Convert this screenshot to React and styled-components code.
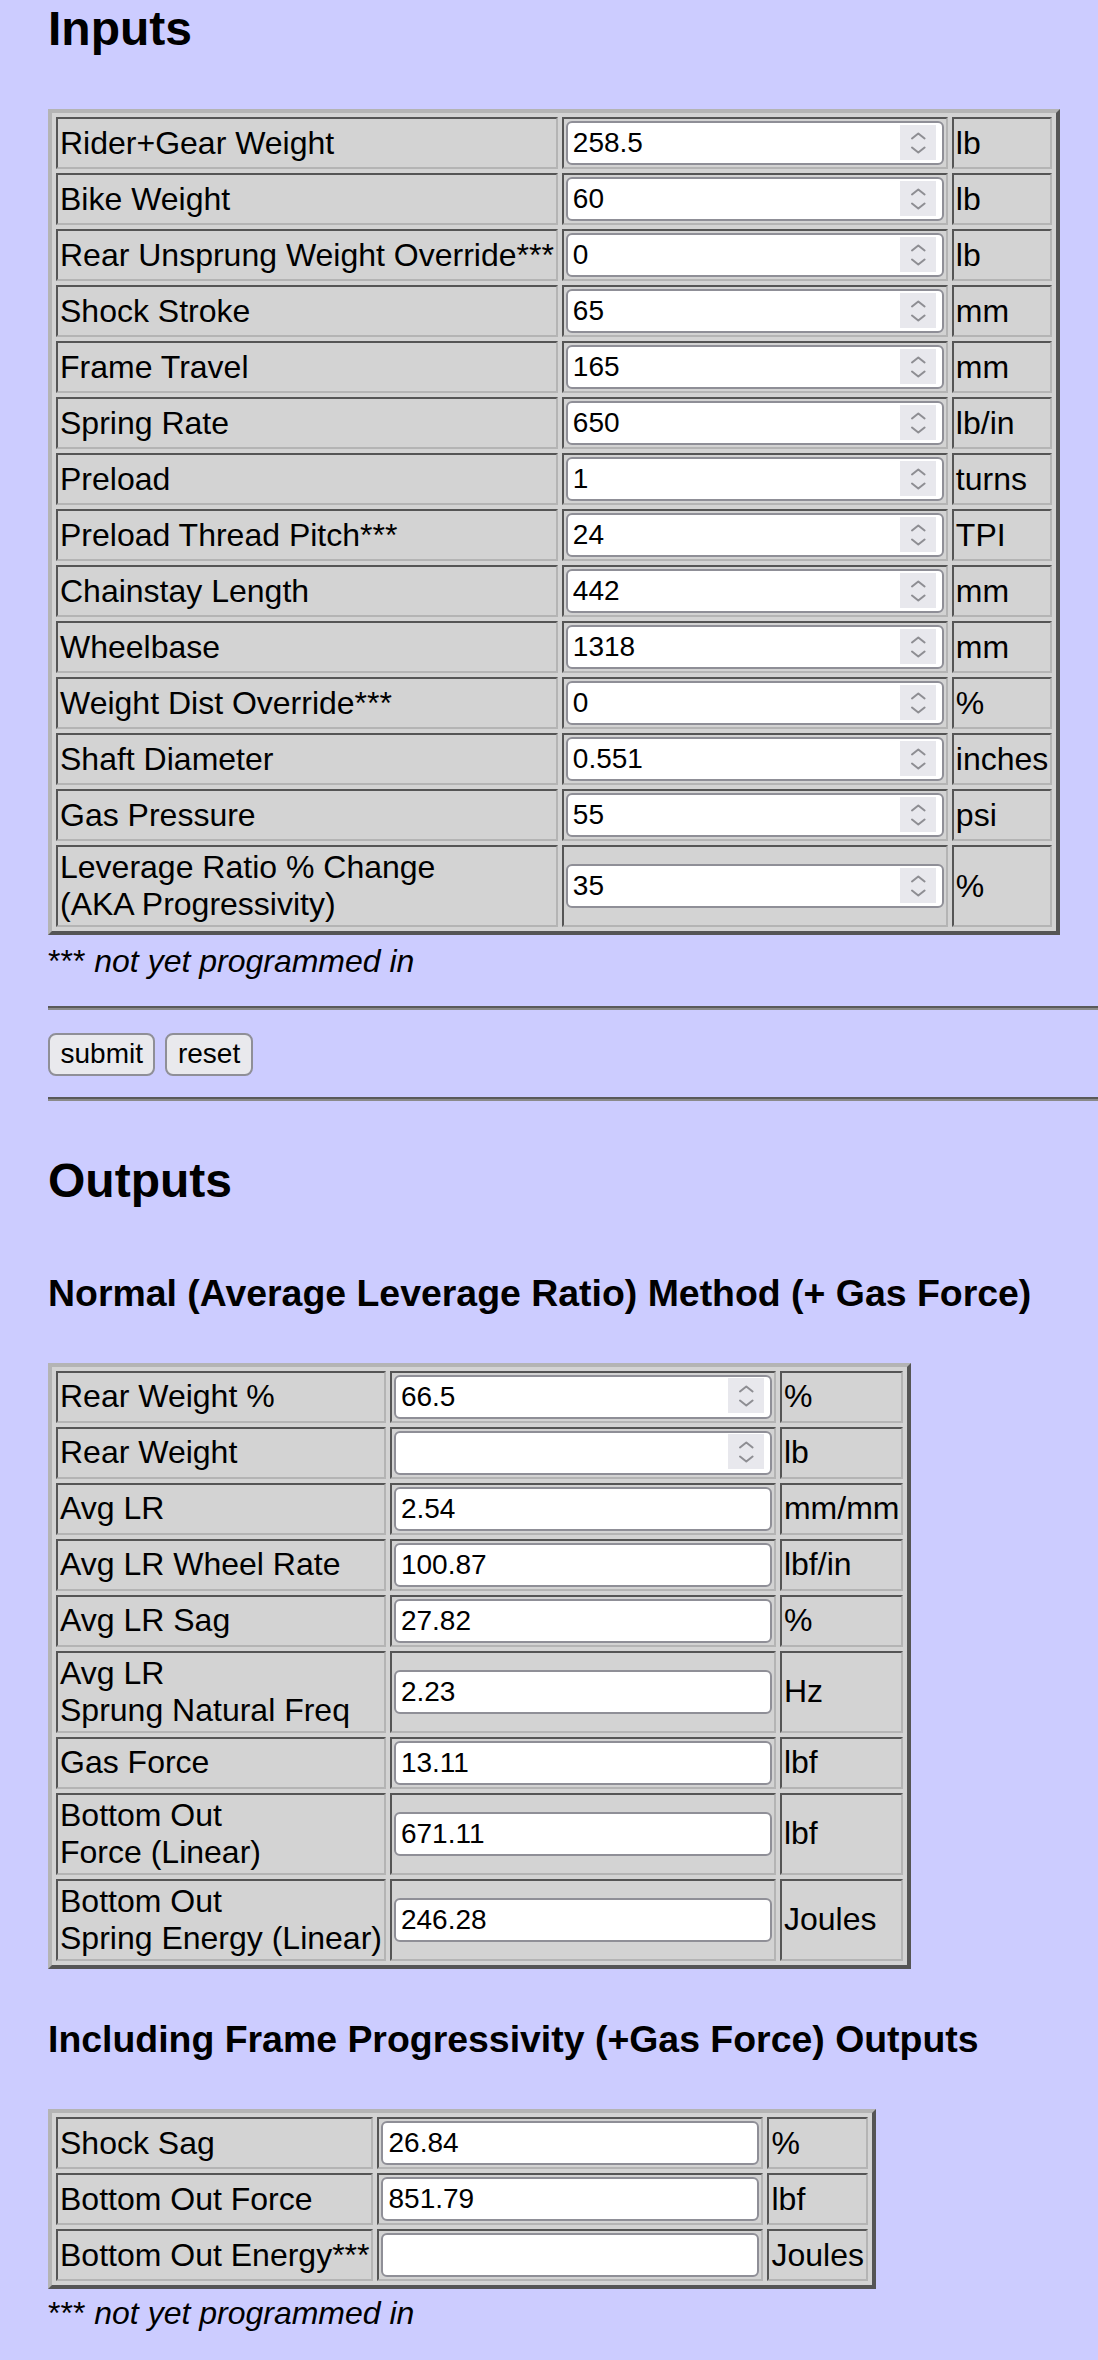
import React from "react";
import styled, { createGlobalStyle } from "styled-components";

const GlobalStyle = createGlobalStyle`
  html, body {
    margin: 0;
    padding: 0;
    background: #ccccff;
  }
  body {
    font-family: "Liberation Sans", Arial, Helvetica, sans-serif;
    color: #000;
  }
`;

const Page = styled.main`
  padding: 1px 0 40px 48px;
  font-size: 32px;
  line-height: normal;
`;

const Title = styled.h1`
  margin: ${(p) => p.$top || 0}px 0 ${(p) => p.$bottom || 0}px;
  font-size: 48px;
  font-weight: bold;
  line-height: normal;
`;

const SubTitle = styled.h3`
  margin: ${(p) => p.$top || 0}px 0 0;
  font-size: 37.44px;
  font-weight: bold;
  line-height: normal;
  white-space: nowrap;
`;

const DataTable = styled.table`
  margin-top: ${(p) => p.$top || 0}px;
  border-collapse: separate;
  border-spacing: 4px;
  border-width: 4px;
  border-style: solid;
  border-color: #b4b4b4 #555555 #555555 #b4b4b4;
  background: #d3d3d3;
`;

const Cell = styled.td`
  padding: 2px;
  border-width: 2px;
  border-style: solid;
  border-color: #555555 #b4b4b4 #b4b4b4 #555555;
  white-space: nowrap;
  vertical-align: middle;
  font-size: 32px;
  line-height: normal;
  color: #000;
`;

const FieldBox = styled.div`
  position: relative;
  width: 378px;
  height: 44px;
`;

const Field = styled.input`
  box-sizing: border-box;
  display: block;
  width: 100%;
  height: 100%;
  margin: 0;
  padding: 0 5px;
  border: 2px solid #8f8f97;
  border-radius: 6px;
  background: #ffffff;
  color: #000;
  font-family: "Liberation Sans", Arial, sans-serif;
  font-size: 28px;
  outline: none;
`;

const Spinner = styled.span`
  position: absolute;
  top: 3.5px;
  right: 8px;
  width: 36px;
  height: 35px;
  display: block;
  background: #e8e8ed;
  pointer-events: none;
`;

const Footnote = styled.p`
  margin: ${(p) => p.$top || 0}px 0 0;
  font-size: 32px;
  line-height: normal;
`;

const Rule = styled.hr`
  margin: ${(p) => p.$top || 0}px 0 0;
  height: 0;
  border: 0;
  border-top: 2px solid #595959;
  border-bottom: 2px solid #8a8a8a;
`;

const ButtonRow = styled.div`
  display: flex;
  gap: 10px;
  margin-top: 23px;
`;

const Button = styled.button`
  box-sizing: border-box;
  height: 43px;
  padding: 0 10.5px;
  margin: 0;
  border: 2px solid #8f8f97;
  border-radius: 8px;
  background: #e9e9ed;
  color: #000;
  font-family: "Liberation Sans", Arial, sans-serif;
  font-size: 28px;
  line-height: 1;
`;

function SpinIcon() {
  return (
    <Spinner>
      <svg width="36" height="35" viewBox="0 0 36 35">
        <path
          d="M12 13.5 L18.3 8.5 L24.6 13.5"
          fill="none"
          stroke="#8e8e93"
          strokeWidth="2"
          strokeLinecap="round"
          strokeLinejoin="round"
        />
        <path
          d="M12 22.5 L18.3 27.5 L24.6 22.5"
          fill="none"
          stroke="#8e8e93"
          strokeWidth="2"
          strokeLinecap="round"
          strokeLinejoin="round"
        />
      </svg>
    </Spinner>
  );
}

function Label({ text }) {
  if (Array.isArray(text)) {
    return (
      <>
        {text[0]}
        <br />
        {text[1]}
      </>
    );
  }
  return text;
}

function Row({ label, value, unit, spin }) {
  return (
    <tr>
      <Cell>
        <Label text={label} />
      </Cell>
      <Cell>
        <FieldBox>
          <Field type="text" defaultValue={value} />
          {spin && <SpinIcon />}
        </FieldBox>
      </Cell>
      <Cell>{unit}</Cell>
    </tr>
  );
}

const inputs = [
  ["Rider+Gear Weight", "258.5", "lb"],
  ["Bike Weight", "60", "lb"],
  ["Rear Unsprung Weight Override***", "0", "lb"],
  ["Shock Stroke", "65", "mm"],
  ["Frame Travel", "165", "mm"],
  ["Spring Rate", "650", "lb/in"],
  ["Preload", "1", "turns"],
  ["Preload Thread Pitch***", "24", "TPI"],
  ["Chainstay Length", "442", "mm"],
  ["Wheelbase", "1318", "mm"],
  ["Weight Dist Override***", "0", "%"],
  ["Shaft Diameter", "0.551", "inches"],
  ["Gas Pressure", "55", "psi"],
  [["Leverage Ratio % Change", "(AKA Progressivity)"], "35", "%"],
];

const normalOutputs = [
  ["Rear Weight %", "66.5", "%", true],
  ["Rear Weight", "", "lb", true],
  ["Avg LR", "2.54", "mm/mm"],
  ["Avg LR Wheel Rate", "100.87", "lbf/in"],
  ["Avg LR Sag", "27.82", "%"],
  [["Avg LR", "Sprung Natural Freq"], "2.23", "Hz"],
  ["Gas Force", "13.11", "lbf"],
  [["Bottom Out", "Force (Linear)"], "671.11", "lbf"],
  [["Bottom Out", "Spring Energy (Linear)"], "246.28", "Joules"],
];

const progressiveOutputs = [
  ["Shock Sag", "26.84", "%"],
  ["Bottom Out Force", "851.79", "lbf"],
  ["Bottom Out Energy***", "", "Joules"],
];

function Table({ rows, top, spinAll }) {
  return (
    <DataTable $top={top}>
      <tbody>
        {rows.map((r, i) => (
          <Row
            key={i}
            label={r[0]}
            value={r[1]}
            unit={r[2]}
            spin={spinAll || r[3]}
          />
        ))}
      </tbody>
    </DataTable>
  );
}

function Note({ top }) {
  return (
    <Footnote $top={top}>
      *** <em>not yet programmed in</em>
    </Footnote>
  );
}

export default function App() {
  return (
    <>
      <GlobalStyle />
      <Page>
        <Title $bottom={53}>Inputs</Title>
        <Table rows={inputs} spinAll />
        <Note top={8} />
        <Rule $top={25.6} />
        <ButtonRow>
          <Button type="button">submit</Button>
          <Button type="button">reset</Button>
        </ButtonRow>
        <Rule $top={21} />
        <Title $top={52.5}>Outputs</Title>
        <SubTitle $top={63.5}>
          Normal (Average Leverage Ratio) Method (+ Gas Force)
        </SubTitle>
        <Table rows={normalOutputs} top={48} />
        <SubTitle $top={49.5}>
          Including Frame Progressivity (+Gas Force) Outputs
        </SubTitle>
        <Table rows={progressiveOutputs} top={48} />
        <Note top={6} />
      </Page>
    </>
  );
}
